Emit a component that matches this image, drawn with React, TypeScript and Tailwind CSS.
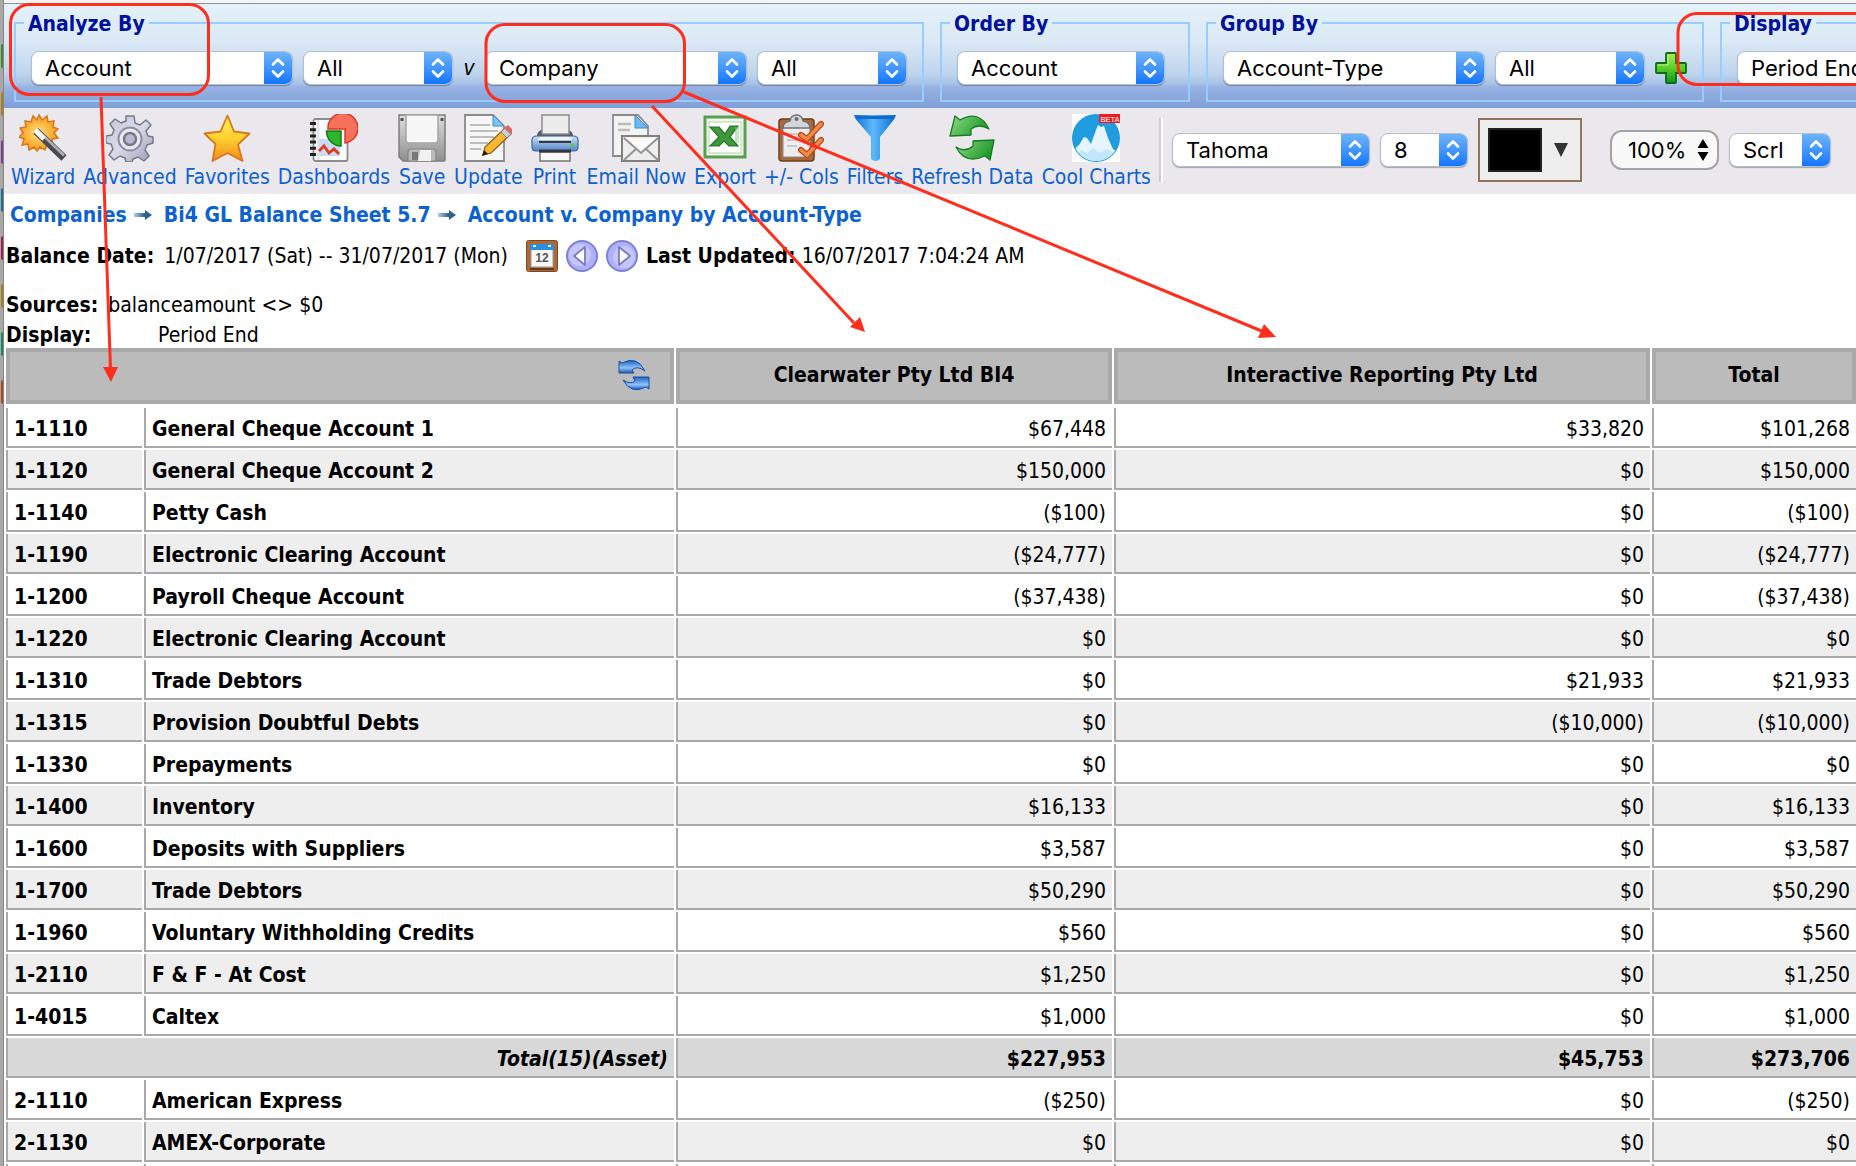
import { Fragment, type ReactNode } from 'react';
import clsx from 'clsx';

type Row = {
  code?: string;
  name: string;
  values: string[];
  total?: boolean;
};

const rows: Row[] = [
  { code: '1-1110', name: 'General Cheque Account 1', values: ['$67,448', '$33,820', '$101,268'] },
  { code: '1-1120', name: 'General Cheque Account 2', values: ['$150,000', '$0', '$150,000'] },
  { code: '1-1140', name: 'Petty Cash', values: ['($100)', '$0', '($100)'] },
  { code: '1-1190', name: 'Electronic Clearing Account', values: ['($24,777)', '$0', '($24,777)'] },
  { code: '1-1200', name: 'Payroll Cheque Account', values: ['($37,438)', '$0', '($37,438)'] },
  { code: '1-1220', name: 'Electronic Clearing Account', values: ['$0', '$0', '$0'] },
  { code: '1-1310', name: 'Trade Debtors', values: ['$0', '$21,933', '$21,933'] },
  { code: '1-1315', name: 'Provision Doubtful Debts', values: ['$0', '($10,000)', '($10,000)'] },
  { code: '1-1330', name: 'Prepayments', values: ['$0', '$0', '$0'] },
  { code: '1-1400', name: 'Inventory', values: ['$16,133', '$0', '$16,133'] },
  { code: '1-1600', name: 'Deposits with Suppliers', values: ['$3,587', '$0', '$3,587'] },
  { code: '1-1700', name: 'Trade Debtors', values: ['$50,290', '$0', '$50,290'] },
  { code: '1-1960', name: 'Voluntary Withholding Credits', values: ['$560', '$0', '$560'] },
  { code: '1-2110', name: 'F & F - At Cost', values: ['$1,250', '$0', '$1,250'] },
  { code: '1-4015', name: 'Caltex', values: ['$1,000', '$0', '$1,000'] },
  { name: 'Total(15)(Asset)', values: ['$227,953', '$45,753', '$273,706'], total: true },
  { code: '2-1110', name: 'American Express', values: ['($250)', '$0', '($250)'] },
  { code: '2-1130', name: 'AMEX-Corporate', values: ['$0', '$0', '$0'] },
  { code: '', name: '', values: ['', '', ''] },
];

const tools: { label: string; icon: ReactNode }[] = [
  { label: 'Wizard', icon: <WizardIcon /> },
  { label: 'Advanced', icon: <GearIcon /> },
  { label: 'Favorites', icon: <StarIcon /> },
  { label: 'Dashboards', icon: <DashboardIcon /> },
  { label: 'Save', icon: <SaveIcon /> },
  { label: 'Update', icon: <UpdateIcon /> },
  { label: 'Print', icon: <PrintIcon /> },
  { label: 'Email Now', icon: <EmailIcon /> },
  { label: 'Export', icon: <ExportIcon /> },
  { label: '+/- Cols', icon: <ColsIcon /> },
  { label: 'Filters', icon: <FilterIcon /> },
  { label: 'Refresh Data', icon: <RefreshIcon /> },
  { label: 'Cool Charts', icon: <ChartsIcon /> },
];

const crumbs = ['Companies', 'Bi4 GL Balance Sheet 5.7', 'Account v. Company by Account-Type'];

export default function App() {
  return (
    <div className="relative flex h-screen overflow-hidden bg-white font-['DejaVu_Sans_Condensed','DejaVu_Sans',sans-serif] text-[21px] leading-7 text-black">
      <DesktopEdge />
      <main className="min-w-0 flex-1 overflow-hidden">
        <div className="h-1 border-b border-[#8f9297] bg-[#f4f4f4]" />
        <FilterBar />
        <Toolbar />
        <ReportInfo />
        <BalanceTable />
      </main>
      <Annotations />
    </div>
  );
}

// sliver of the desktop showing beside the browser window
function DesktopEdge() {
  return (
    <div className="flex w-1 shrink-0 flex-col items-end gap-6 border-r border-[#858585] bg-[#a9a8a6] pt-11">
      <span className="h-6 w-0.5 rounded-l bg-[#3f8a2c]" />
      <span className="h-6 w-0.5 rounded-l bg-[#a8801a]" />
      <span className="h-6 w-0.5 rounded-l bg-[#7d3c8c]" />
      <span className="h-6 w-0.5 rounded-l bg-[#1c6e93]" />
      <span className="h-6 w-0.5 rounded-l bg-[#a81c4c]" />
      <span className="h-6 w-0.5 rounded-l bg-[#a8801a]" />
      <span className="h-6 w-0.5 rounded-l bg-[#128a68]" />
      <span className="h-6 w-0.5 rounded-l bg-[#a8481a]" />
    </div>
  );
}

function Picker({ label, value, width }: { label: string; value: string; width: string }) {
  return (
    <div
      className={clsx(
        'relative h-[34px] shrink-0 overflow-hidden rounded-lg border border-[#b4c0cf] bg-white shadow-[0_1px_1px_rgba(0,0,0,0.3)]',
        width,
      )}
    >
      <select
        aria-label={label}
        defaultValue={value}
        className="h-full w-full appearance-none bg-transparent pr-8 pl-[13px] font-['Inter',sans-serif] text-[22px] leading-8 outline-none"
      >
        <option>{value}</option>
      </select>
      <span className="pointer-events-none absolute inset-y-0 right-0 flex w-7 items-center justify-center bg-linear-to-b from-[#6cb3fa] to-[#0f76ff]">
        <svg viewBox="0 0 14 22" className="h-[22px] w-3.5" fill="none" stroke="#fff" strokeWidth="2.6" strokeLinecap="round" strokeLinejoin="round">
          <path d="M2 7.5 7 2.5l5 5M2 14.5l5 5 5-5" />
        </svg>
      </span>
    </div>
  );
}

function Group({ title, className, children }: { title: string; className?: string; children: ReactNode }) {
  return (
    <fieldset className={clsx('shrink-0 border-2 border-[#99ccff] px-[15px] pb-[15px]', className)}>
      <legend className="-ml-[7px] px-1 pt-0.5 leading-7 font-bold text-[#00109c]">{title}</legend>
      <div className="flex items-center gap-2.5 pt-[13px]">{children}</div>
    </fieldset>
  );
}

function FilterBar() {
  return (
    <form className="flex gap-4 overflow-hidden bg-[linear-gradient(#e3f1f8_0%,#dbe9f5_36%,#bdd3ed_68%,#a9c3e8_76%,#97b2e3_80%,#7f9fd9_100%)] pt-1 pb-1.5 pl-2.5">
      <Group title="Analyze By">
        <Picker label="Analyze by" value="Account" width="w-[262px]" />
        <Picker label="Analyze by value" value="All" width="w-[150px]" />
        <em className="w-3 text-center">v</em>
        <Picker label="Versus" value="Company" width="w-[262px]" />
        <Picker label="Versus value" value="All" width="w-[150px]" />
      </Group>
      <Group title="Order By" className="w-[250px]">
        <Picker label="Order by" value="Account" width="w-[208px]" />
      </Group>
      <Group title="Group By" className="w-[496px]">
        <Picker label="Group by" value="Account-Type" width="w-[262px]" />
        <Picker label="Group by value" value="All" width="w-[150px]" />
        <button type="button" aria-label="Add group" className="h-8 w-8 shrink-0">
          <PlusIcon />
        </button>
      </Group>
      <Group title="Display">
        <Picker label="Display" value="Period End" width="w-[262px]" />
      </Group>
    </form>
  );
}

function Toolbar() {
  return (
    <div className="flex h-[86px] items-start bg-[#ebe8ed] pl-[7px] whitespace-nowrap">
      <nav className="flex shrink-0 gap-2 pt-1.5">
        {tools.map((t) => (
          <a key={t.label} href="#" className="flex flex-col items-center gap-px text-[#0c62cf]">
            {t.icon}
            {t.label}
          </a>
        ))}
      </nav>
      <div className="mt-2.5 ml-2 flex h-16 items-center">
        <span className="h-full w-1 border-r-2 border-l-2 border-r-white border-l-[#cfcccb]" />
        <div className="ml-[9px] flex items-center gap-2.5">
          <Picker label="Font" value="Tahoma" width="w-[198px]" />
          <Picker label="Font size" value="8" width="w-[88px]" />
          <button type="button" aria-label="Text colour" className="flex h-16 w-[104px] items-center gap-3 border-2 border-[#8f735a] bg-[#eeeeee] pl-2">
            <span className="h-11 w-[54px] border-2 border-[#222] bg-black" />
            <svg viewBox="0 0 14 14" className="h-3.5 w-3.5">
              <path d="M0 0h14L7 14z" fill="#333" />
            </svg>
          </button>
        </div>
        <div className="ml-7 flex items-center gap-2.5">
          <div className="relative h-10 w-[109px] rounded-xl border-2 border-[#a3a3a3] bg-[#f8f8f8]">
            <select aria-label="Zoom" defaultValue="100%" className="h-full w-full appearance-none bg-transparent pl-4 font-['Inter',sans-serif] text-[22px] outline-none">
              <option>100%</option>
            </select>
            <svg viewBox="0 0 12 22" className="pointer-events-none absolute top-[7px] right-2 h-[22px] w-3">
              <path d="M6 0l5.500 9H.5zM6 22l5.500-9H.5z" />
            </svg>
          </div>
          <Picker label="Scroll mode" value="Scrl" width="w-[102px]" />
        </div>
      </div>
    </div>
  );
}

function ReportInfo() {
  return (
    <section className="pl-0.5 whitespace-nowrap">
      <nav className="flex items-center pt-[7px] pl-1 font-bold text-[#0c62cf]">
        {crumbs.map((c, i) => (
          <Fragment key={c}>
            {i > 0 && <CrumbArrow />}
            <a href="#">{c}</a>
          </Fragment>
        ))}
      </nav>
      <div className="mt-[11px] flex h-8 items-center gap-2">
        <b className="mr-0.5">Balance Date:</b>
        <span className="mr-2.5">1/07/2017 (Sat) -- 31/07/2017 (Mon)</span>
        <button type="button" aria-label="Pick dates">
          <CalendarIcon />
        </button>
        <button type="button" aria-label="Previous period">
          <StepIcon />
        </button>
        <button type="button" aria-label="Next period" className="rotate-180">
          <StepIcon />
        </button>
        <span>
          <b>Last Updated:</b> 16/07/2017 7:04:24 AM
        </span>
      </div>
      <div className="mt-[19px] flex gap-2.5">
        <b>Sources:</b>
        <span>balanceamount &lt;&gt; $0</span>
      </div>
      <div className="mt-0.5 flex">
        <b className="w-[152px]">Display:</b>
        <span>Period End</span>
      </div>
    </section>
  );
}

function BalanceTable() {
  const head = 'h-14 border-4 border-[#a9a9a9] bg-[#bbbbbb] px-0 pt-0 pb-0.5 font-bold';
  const cell = 'h-10 border-b-2 border-l-2 border-[#a9a9a9] px-1.5 pt-[3px] pb-0';

  return (
    <div className="-mt-[3px] -mr-0.5">
      <table className="w-full table-fixed border-separate border-spacing-0.5">
        <colgroup>
          <col className="w-[136px]" />
          <col />
          <col className="w-[436px]" />
          <col className="w-[536px]" />
          <col className="w-[204px]" />
        </colgroup>
        <thead>
          <tr>
            <th colSpan={2} className={head}>
              <button type="button" aria-label="Swap axes" className="mr-5 ml-auto block">
                <SwapIcon />
              </button>
            </th>
            <th className={head}>Clearwater Pty Ltd BI4</th>
            <th className={head}>Interactive Reporting Pty Ltd</th>
            <th className={head}>Total</th>
          </tr>
          <tr aria-hidden="true" />
        </thead>
        <tbody>
          {rows.map((r, i) => (
            <tr key={i} className={r.total ? 'bg-[#d8d8d8] font-bold' : 'odd:bg-white even:bg-[#eeeeee]'}>
              {r.total ? (
                <th colSpan={2} className={clsx(cell, 'text-right italic')}>
                  {r.name}
                </th>
              ) : (
                <>
                  <th className={clsx(cell, 'text-left')}>{r.code}</th>
                  <th className={clsx(cell, 'text-left')}>{r.name}</th>
                </>
              )}
              {r.values.map((v, j) => (
                <td key={j} className={clsx(cell, 'text-right')}>
                  {v}
                </td>
              ))}
            </tr>
          ))}
        </tbody>
      </table>
    </div>
  );
}

// red callouts drawn over the page
function Annotations() {
  return (
    <svg className="pointer-events-none absolute top-0 left-0" width="1900" height="400" fill="none" stroke="#ff2d1c" strokeWidth="3">
      <rect x="10.500" y="4.500" width="198" height="90" rx="19" />
      <rect x="486" y="24.500" width="198.500" height="77" rx="19" />
      <rect x="1678" y="13.500" width="240" height="71" rx="19" />
      <path d="M101 97l9.500 272M652 106l202 217M684 92l580 240" />
      <g fill="#ff2d1c" stroke="none">
        <path d="M103 367h15l-7 15z" />
        <path d="M850 327l10-10 5 15z" />
        <path d="M1258 338l6-14 12 13z" />
      </g>
    </svg>
  );
}

function CrumbArrow() {
  return (
    <svg viewBox="0 0 20 12" className="mr-[11px] ml-1.5 h-3 w-5">
      <defs>
        <linearGradient id="crumb" x1="0" x2="1">
          <stop offset="0" stopColor="#a9cdf0" />
          <stop offset="0.6" stopColor="#2f5f93" />
        </linearGradient>
      </defs>
      <path d="M1 4h11V1l7 5-7 5V8H1z" fill="url(#crumb)" />
    </svg>
  );
}

function PlusIcon() {
  return (
    <svg viewBox="0 0 32 32" className="h-8 w-8">
      <defs>
        <linearGradient id="plus" x1="0" y1="0" x2="0" y2="1">
          <stop offset="0" stopColor="#a8ee5a" />
          <stop offset="0.45" stopColor="#5fd32c" />
          <stop offset="1" stopColor="#0b9a16" />
        </linearGradient>
      </defs>
      <path d="M12 1h8q1 0 1 1v9h9q1 0 1 1v8q0 1-1 1h-9v9q0 1-1 1h-8q-1 0-1-1v-9H2q-1 0-1-1v-8q0-1 1-1h9V2q0-1 1-1z" fill="url(#plus)" stroke="#0d6b14" strokeWidth="1.800" />
      <path d="M13 3v10H3" fill="none" stroke="#d6fbb0" strokeOpacity="0.7" />
    </svg>
  );
}

function WizardIcon() {
  return (
    <svg viewBox="0 0 48 48" className="h-12 w-12">
      <defs>
        <radialGradient id="burst">
          <stop offset="0" stopColor="#ffe27a" />
          <stop offset="1" stopColor="#f79a1c" />
        </radialGradient>
      </defs>
      <path d="M20 1l3 5 5-4 1 6 6-1-1 6 5 2-4 4 4 5-6 1 1 6-6-1-2 6-5-3-3 4-3-4-5 3-1-6-6 1 2-6-5-2 4-4-3-5 6-1-1-6 6 1 2-6 4 4z" fill="url(#burst)" stroke="#d9761a" strokeWidth="1.500" />
      <path d="M17 17l28 27" stroke="#4a4a50" strokeWidth="7.500" />
      <path d="M18 15.500l27 26" stroke="#aeb1b8" strokeWidth="2.500" />
      <path d="M16 16l9 9" stroke="#f4f4f6" strokeWidth="5" />
    </svg>
  );
}

function GearIcon() {
  return (
    <svg viewBox="0 0 48 48" className="h-12 w-12">
      <defs>
        <linearGradient id="gear" x1="0" y1="0" x2="1" y2="1">
          <stop offset="0" stopColor="#c3c6da" />
          <stop offset="0.5" stopColor="#d9dae8" />
          <stop offset="1" stopColor="#9a9bb4" />
        </linearGradient>
      </defs>
      <path
        d="M20 2h8l1 7 5 2 6-5 5 5-5 6 2 5 5 1v6l-6 2-2 5 4 6-5 5-6-4-5 2-1 3h-6l-1-4-5-2-6 4-5-5 4-6-2-5-5-1v-7l6-1 2-5-4-6 5-5 6 4 5-2z"
        fill="url(#gear)"
        stroke="#77798a"
        strokeWidth="1.500"
        strokeLinejoin="round"
      />
      <circle cx="24" cy="25" r="11.500" fill="#e9e9f2" stroke="#8c8da0" strokeWidth="2" />
      <circle cx="24" cy="25" r="6" fill="#b9bad2" stroke="#77798a" strokeWidth="2.500" />
    </svg>
  );
}

function StarIcon() {
  return (
    <svg viewBox="0 0 48 48" className="h-12 w-12">
      <defs>
        <linearGradient id="star" x1="0" y1="0" x2="0" y2="1">
          <stop offset="0" stopColor="#fff15c" />
          <stop offset="0.5" stopColor="#ffd02e" />
          <stop offset="1" stopColor="#f58a1b" />
        </linearGradient>
      </defs>
      <path d="M24.500 1.500l6.500 16 15.500 2-11.500 11 4.500 16.500-15-8-15 8 3-17L1.500 19.500l16-2z" fill="url(#star)" stroke="#d9781a" strokeWidth="1.800" strokeLinejoin="round" />
    </svg>
  );
}

function DashboardIcon() {
  return (
    <svg viewBox="0 0 48 48" className="h-12 w-12">
      <rect x="3.500" y="5" width="34" height="42" rx="2" fill="#fff" stroke="#8d8d8d" strokeWidth="1.800" />
      <path d="M8 6v40" stroke="#e3e3e8" strokeWidth="3" />
      <path d="M3 8v37" stroke="#222" strokeWidth="6" strokeDasharray="3 3.200" />
      <path d="M9 25h21v17H9z" fill="#c9dcf7" />
      <path d="M9 37l5-5 5 7 5-4 5 5" fill="none" stroke="#e03a18" strokeWidth="2.800" />
      <path d="M18 15A15 15 0 1 1 35 29V15z" fill="#f8705a" stroke="#d8392b" strokeWidth="1.500" />
      <path d="M31 17v15A15 15 0 0 1 16.500 17z" fill="#2fb52a" stroke="#147a18" strokeWidth="1.500" />
    </svg>
  );
}

function SaveIcon() {
  return (
    <svg viewBox="0 0 48 48" className="h-12 w-12">
      <defs>
        <linearGradient id="disk" x1="0" y1="0" x2="0" y2="1">
          <stop offset="0" stopColor="#dedede" />
          <stop offset="1" stopColor="#8f8f8f" />
        </linearGradient>
      </defs>
      <path d="M1 1h46v45q0 1-1 1H5l-4-4z" fill="url(#disk)" stroke="#7d7d7d" strokeWidth="1.500" />
      <path d="M8 1h32v25q0 3-3 3H11q-3 0-3-3z" fill="#f6f6f6" stroke="#a5a5a5" strokeWidth="1.500" />
      <path d="M10 47V38q0-3 3-3h22q3 0 3 3v9z" fill="#b9b9b9" stroke="#858585" strokeWidth="1.200" />
      <path d="M22 36h11v11H20z" fill="#f1f1f1" />
      <path d="M14 38h6v8h-6z" fill="#777" />
      <path d="M2.500 4h3v3h-3zM42.500 4h3v3h-3z" fill="#555" />
    </svg>
  );
}

function UpdateIcon() {
  return (
    <svg viewBox="0 0 48 48" className="h-12 w-12">
      <path d="M1 1h28l11 11v35H1z" fill="#f6f6f6" stroke="#8b8b8b" strokeWidth="1.800" />
      <path d="M29 1l11 11H29z" fill="#7cc4f5" stroke="#3c8fd0" />
      <path d="M6 11h20M6 17h28M6 23h24M6 29h18M6 35h11" stroke="#bdbdbd" strokeWidth="2" />
      <path d="M19 41l2-8 21-20 6 6-21 20z" fill="#f7b733" stroke="#8f5a12" strokeWidth="1.200" />
      <path d="M37 18l5-5 6 6-5 5z" fill="#c9ced6" stroke="#777" strokeWidth="0.800" />
      <path d="M40 14l4-3 5 5-3 4z" fill="#d86a6a" />
      <path d="M18 42l2-6 4 4z" fill="#2b1a0d" />
    </svg>
  );
}

function PrintIcon() {
  return (
    <svg viewBox="0 0 48 48" className="h-12 w-12">
      <defs>
        <linearGradient id="printer" x1="0" y1="0" x2="0" y2="1">
          <stop offset="0" stopColor="#cfe0f5" />
          <stop offset="1" stopColor="#4f86c9" />
        </linearGradient>
      </defs>
      <path d="M6 22q0-4 4-6l4-2h20l4 2q4 2 4 6z" fill="#555a60" />
      <path d="M11 1h27v19H11z" fill="#ececec" stroke="#8d8d8d" strokeWidth="1.500" />
      <path d="M1 26q0-4 5-4h36q5 0 5 4v7q0 4-4 4H5q-4 0-4-4z" fill="url(#printer)" stroke="#44699c" strokeWidth="1.200" />
      <path d="M7 26q0-3 4-3h26q4 0 4 3z" fill="#f2f2f2" />
      <path d="M8 28h32" stroke="#34383e" strokeWidth="2" />
      <circle cx="41" cy="31" r="1.800" fill="#49d63a" />
      <path d="M9 38h30v9H9z" fill="#f7f7f7" stroke="#777" strokeWidth="1.500" />
      <path d="M8 37h32" stroke="#34383e" strokeWidth="3" />
    </svg>
  );
}

function EmailIcon() {
  return (
    <svg viewBox="0 0 48 48" className="h-12 w-12">
      <path d="M1 1h25l10 11v30H1z" fill="#f3f3f3" stroke="#8b8b8b" strokeWidth="1.800" />
      <path d="M23 1l13 13H23z" fill="#6db9f2" stroke="#3c8fd0" />
      <path d="M6 10h13M6 16h12" stroke="#bdbdbd" strokeWidth="2.400" />
      <path d="M10 22h37v25H10z" fill="#ededed" stroke="#808080" strokeWidth="2" />
      <path d="M12 24l17 15 17-15M12 46l12-11M46 46L34 35" fill="none" stroke="#949494" strokeWidth="2" />
      <path d="M14 24h30L29 37z" fill="#fafafa" />
    </svg>
  );
}

function ExportIcon() {
  return (
    <svg viewBox="0 0 48 48" className="h-12 w-12">
      <rect x="4" y="3" width="40" height="40" fill="#eff6ea" stroke="#5a9e52" strokeWidth="3" />
      <rect x="8" y="8" width="32" height="31" fill="#fff" stroke="#b5d6a8" />
      <path d="M9 13h9l6 7 5-8h8l-8 11 8 9H28l-5-5-5 5H9l9-9z" fill="#3f9a3c" stroke="#24702a" strokeWidth="1.200" />
      <path d="M34 13h4v16h-4z" fill="#8cc77f" fillOpacity="0.5" />
    </svg>
  );
}

function ColsIcon() {
  return (
    <svg viewBox="0 0 48 48" className="h-12 w-12">
      <rect x="2" y="5" width="35" height="42" rx="3" fill="#a8683a" stroke="#6d3f1d" strokeWidth="1.500" />
      <path d="M6 12h27v31H6z" fill="#ededf0" stroke="#8a8a8a" />
      <path d="M10 20h18M10 26h12M10 32h10" stroke="#c9c9c9" strokeWidth="2" />
      <path d="M6 14q0-6 7-7 1-6 6.500-6T26 7q7 1 7 7z" fill="#d3d5d8" stroke="#6d7075" strokeWidth="1.500" />
      <circle cx="19.500" cy="5" r="2" fill="#707070" />
      <path d="M24 21l6 4 14-15M24 36l6 5 14-15" fill="none" stroke="#b84713" strokeWidth="6" strokeLinecap="round" />
      <path d="M24 21l6 4 14-15M24 36l6 5 14-15" fill="none" stroke="#f28a4a" strokeWidth="3.500" strokeLinecap="round" />
    </svg>
  );
}

function FilterIcon() {
  return (
    <svg viewBox="0 0 48 48" className="h-12 w-12">
      <defs>
        <linearGradient id="funnel" x1="0" x2="1">
          <stop offset="0" stopColor="#0f6fd0" />
          <stop offset="0.45" stopColor="#5db8fb" />
          <stop offset="1" stopColor="#0c6fcf" />
        </linearGradient>
      </defs>
      <path d="M3 1h42q-1 4-4 7L29 23v22q-5 4-9 0V23L7 8Q4 5 3 1z" fill="url(#funnel)" />
      <path d="M4 2h40l-2 3H6z" fill="#0e6dc9" />
    </svg>
  );
}

function RefreshIcon() {
  return (
    <svg viewBox="0 0 48 48" className="h-12 w-12">
      <defs>
        <linearGradient id="fresh" x1="0" y1="0" x2="1" y2="0.400">
          <stop offset="0" stopColor="#8fdc84" />
          <stop offset="1" stopColor="#1f9a2a" />
        </linearGradient>
      </defs>
      <g fill="url(#fresh)" stroke="#1b7a26" strokeWidth="1.300" strokeLinejoin="round">
        <path d="M2 22L7 2l5 4Q31-5 41 15q-10-6-18 0v6z" />
        <path d="M46 26l-4 20-5-4Q17 51 8 33q9 6 17-1v-5z" />
      </g>
    </svg>
  );
}

function ChartsIcon() {
  return (
    <svg viewBox="0 0 48 48" className="h-12 w-12">
      <defs>
        <clipPath id="disc">
          <circle cx="24" cy="24" r="23" />
        </clipPath>
      </defs>
      <path d="M0 0h48v48H0z" fill="#fff" />
      <circle cx="24" cy="24" r="24" fill="#1f9de0" />
      <path d="M0 37l7-6 5-8 3 1 4 6 5-14 2-5 3 2 3-1 4 12 5 11 7 5v8H0z" fill="#e6f5fd" clipPath="url(#disc)" />
      <path d="M4 40l6-4 5 3 6-5 7 5 6-4 10 4-4 10H8z" fill="#c3e7fa" clipPath="url(#disc)" />
      <path d="M27 0h21v9H27z" fill="#ec1c24" />
      <text x="28.500" y="7.500" fontSize="7.500" fill="#fff" fontFamily="Liberation Sans, sans-serif">
        BETA
      </text>
    </svg>
  );
}

function CalendarIcon() {
  return (
    <svg viewBox="0 0 32 32" className="h-8 w-8">
      <rect x="0.500" y="0.500" width="31" height="31" rx="2" fill="#a9693a" stroke="#80481f" />
      <path d="M4 28h24v2H4z" fill="#6b3815" />
      <path d="M5 5h22v22H5z" fill="#f7f7f7" stroke="#9b9b9b" />
      <path d="M4 4h24v6H4z" fill="#2f8edb" />
      <path d="M7 6h3M22 6h3" stroke="#d9efff" strokeWidth="2" />
      <text x="16" y="22" textAnchor="middle" fontSize="12" fontWeight="700" fill="#555" fontFamily="Liberation Sans, sans-serif">
        12
      </text>
    </svg>
  );
}

function StepIcon() {
  return (
    <svg viewBox="0 0 32 32" className="h-8 w-8">
      <circle cx="16" cy="16" r="15" fill="#b0b0fa" stroke="#8080d8" strokeWidth="2" />
      <circle cx="14" cy="15" r="11" fill="#d0d0ff" fillOpacity="0.7" />
      <path d="M19 7v18L8 16z" fill="#fff" stroke="#7a7ac0" strokeWidth="1.800" strokeLinejoin="round" />
    </svg>
  );
}

function SwapIcon() {
  return (
    <svg viewBox="0 0 32 32" className="h-8 w-8">
      <defs>
        <linearGradient id="swap" x1="0" y1="0" x2="0" y2="1">
          <stop offset="0" stopColor="#1f5fc4" />
          <stop offset="0.6" stopColor="#8cc4fa" />
          <stop offset="1" stopColor="#1c55b5" />
        </linearGradient>
      </defs>
      <g fill="url(#swap)" stroke="#1b4fa8">
        <path d="M1 14V2l3 2Q19-4 27 12q-8-6-13-1l2 3z" />
        <path d="M31 18v12l-3-2Q13 36 5 21q8 5 12 1l-2-4z" />
      </g>
    </svg>
  );
}
